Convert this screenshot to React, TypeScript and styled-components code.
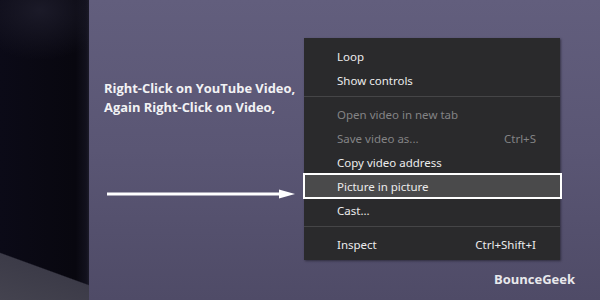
import React from "react";
import styled, { createGlobalStyle } from "styled-components";

const Global = createGlobalStyle`
  html, body { margin: 0; padding: 0; }
  body { width: 600px; height: 300px; overflow: hidden; background: #56526f; }
`;

const Stage = styled.div`
  display: flex;
  width: 600px;
  height: 300px;
  overflow: hidden;
`;

const PhotoEdge = styled.div`
  width: 89px;
  flex: none;
  background:
    linear-gradient(200deg, transparent 0 85.6%, #3c3b48 86%, #44434f 100%),
    radial-gradient(ellipse 70px 50px at 40px 10px, #1b1a28 0%, rgba(27,26,40,0) 100%),
    linear-gradient(to right, #0b0a17 0, #08070f 85%, #12111d 97%, #1c1b29 100%);
`;

const Main = styled.div`
  flex: 1;
  display: flex;
  flex-direction: column;
  padding: 38px 0 0 15px;
  background: linear-gradient(to bottom, #625e7d 0%, #5a5674 50%, #4f4b67 100%);
`;

const Row = styled.div`
  display: flex;
`;

const Instructions = styled.div`
  width: 200px;
  flex: none;
  display: flex;
  flex-direction: column;
  padding-top: 41px;
`;

const Caption = styled.p`
  margin: 0;
  font-family: "Open Sans", sans-serif;
  font-weight: 700;
  font-size: 12.9px;
  line-height: 18.5px;
  color: #f2f2f4;
  white-space: nowrap;
`;

const ArrowArt = styled.svg`
  display: block;
  margin: 72px 0 0 3px;
`;

const Menu = styled.div`
  width: 256px;
  background: #2a2a2c;
  padding: 6px 0 4px;
  box-shadow: 1px 1px 2px rgba(20, 18, 30, 0.55);
  font-family: "Noto Sans", sans-serif;
  font-size: 11.5px;
`;

const Item = styled.div<{ $disabled?: boolean; $active?: boolean }>`
  height: 24px;
  box-sizing: border-box;
  display: flex;
  align-items: center;
  justify-content: space-between;
  padding: 0 24px 0 33px;
  color: ${(p) => (p.$disabled ? "#838385" : "#ececec")};
  background: ${(p) => (p.$active ? "#4a4a4b" : "transparent")};
  outline: ${(p) => (p.$active ? "2.5px solid #ffffff" : "none")};
  outline-offset: -1px;
  width: ${(p) => (p.$active ? "257px" : "auto")};
`;

const Shortcut = styled.span``;

const Separator = styled.div`
  height: 1px;
  background: #454547;
  margin: 4px 0 5px;
`;

const Footer = styled.div`
  display: flex;
  justify-content: flex-end;
  padding: 11px 25px 0 0;
`;

const Brand = styled.span`
  font-family: "Open Sans", sans-serif;
  font-weight: 700;
  font-size: 13px;
  line-height: 17px;
  color: #e8e8ec;
`;

export default function App() {
  return (
    <>
      <Global />
      <Stage>
        <PhotoEdge />
        <Main>
          <Row>
            <Instructions>
              <Caption>
                Right-Click on YouTube Video,
                <br />
                Again Right-Click on Video,
              </Caption>
              <ArrowArt width="190" height="12" viewBox="0 0 190 12">
                <rect x="0" y="4.5" width="176" height="3" fill="#ffffff" />
                <polygon points="172,1.5 188,6 172,10.5" fill="#ffffff" />
              </ArrowArt>
            </Instructions>
            <Menu>
              <Item>Loop</Item>
              <Item>Show controls</Item>
              <Separator />
              <Item $disabled>Open video in new tab</Item>
              <Item $disabled>
                Save video as...
                <Shortcut>Ctrl+S</Shortcut>
              </Item>
              <Item>Copy video address</Item>
              <Item $active>Picture in picture</Item>
              <Item>Cast...</Item>
              <Separator />
              <Item>
                Inspect
                <Shortcut>Ctrl+Shift+I</Shortcut>
              </Item>
            </Menu>
          </Row>
          <Footer>
            <Brand>BounceGeek</Brand>
          </Footer>
        </Main>
      </Stage>
    </>
  );
}
